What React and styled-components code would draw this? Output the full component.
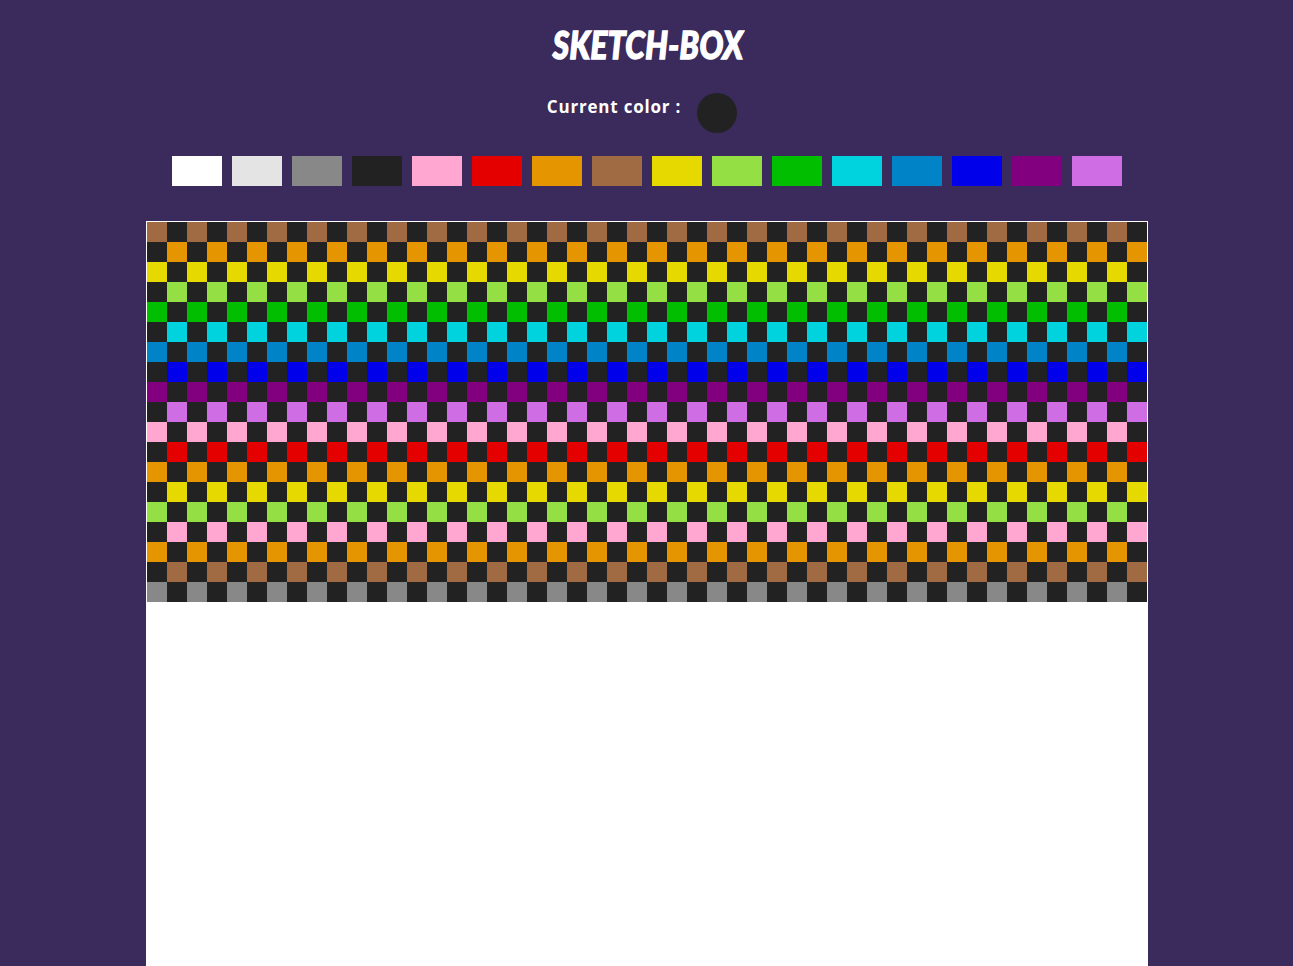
import React from 'react';
import styled, { createGlobalStyle } from 'styled-components';

const GlobalStyle = createGlobalStyle`
  html, body {
    margin: 0;
    padding: 0;
    background-color: #3a2b5c;
  }
`;

const Page = styled.div`
  display: flex;
  flex-direction: column;
  align-items: center;
  padding-top: 22px;
`;
const Title = styled.h1`
  margin: 0 0 0 3px;
  height: 46px;
  line-height: 46px;
  font-family: "Lato", "Liberation Sans", sans-serif;
  font-size: 37px;
  font-weight: 900;
  font-style: italic;
  letter-spacing: 0.5px;
  color: white;
  -webkit-text-stroke: 1.5px white;
  transform: scaleX(0.85);
`;
const CurrentColor = styled.div`
  display: flex;
  align-items: flex-start;
  gap: 16px;
  margin-top: 25px;
  padding-right: 9px;
`;
const Label = styled.span`
  margin-top: 2px;
  line-height: 24px;
  font-family: "Open Sans", "Liberation Sans", sans-serif;
  font-size: 17px;
  font-weight: 700;
  letter-spacing: 0.8px;
  color: white;
`;
const Dot = styled.div`
  width: 40px;
  height: 40px;
  border-radius: 50%;
  background-color: ${(p) => p.color};
`;
const Palette = styled.div`
  display: flex;
  gap: 10px;
  margin-top: 23px;
`;
const Swatch = styled.div`
  width: 50px;
  height: 30px;
  background-color: ${(p) => p.color};
`;
const Canvas = styled.div`
  display: grid;
  grid-template-columns: repeat(50, 20px);
  grid-auto-rows: 20px;
  align-content: start;
  width: 1000px;
  height: 1000px;
  margin-top: 35px;
  border: 1px solid white;
  background-color: white;
`;
const Cell = styled.div`
  background-color: ${(p) => p.color};
`;

const colors = [
  '#ffffff', '#e4e4e4', '#888888', '#222222', '#ffa7d1', '#e50000', '#e59500', '#a06a42',
  '#e5d900', '#94e044', '#02be01', '#00d3dd', '#0083c7', '#0000ea', '#820080', '#cf6ee4',
];

const rows = [
  '#a06a42', '#e59500', '#e5d900', '#94e044', '#02be01', '#00d3dd', '#0083c7', '#0000ea',
  '#820080', '#cf6ee4', '#ffa7d1', '#e50000', '#e59500', '#e5d900', '#94e044', '#ffa7d1',
  '#e59500', '#a06a42', '#888888',
];

function App() {
  const cells = [];
  rows.forEach((color, r) => {
    for (let c = 0; c < 50; c += 1) {
      cells.push(<Cell key={`${r}-${c}`} color={(r + c) % 2 === 0 ? color : '#222222'} />);
    }
  });

  return (
    <Page>
      <GlobalStyle />
      <Title>SKETCH-BOX</Title>
      <CurrentColor>
        <Label>Current color :</Label>
        <Dot color="#222222" />
      </CurrentColor>
      <Palette>
        {colors.map((color) => <Swatch key={color} color={color} />)}
      </Palette>
      <Canvas>{cells}</Canvas>
    </Page>
  );
}

export default App;
